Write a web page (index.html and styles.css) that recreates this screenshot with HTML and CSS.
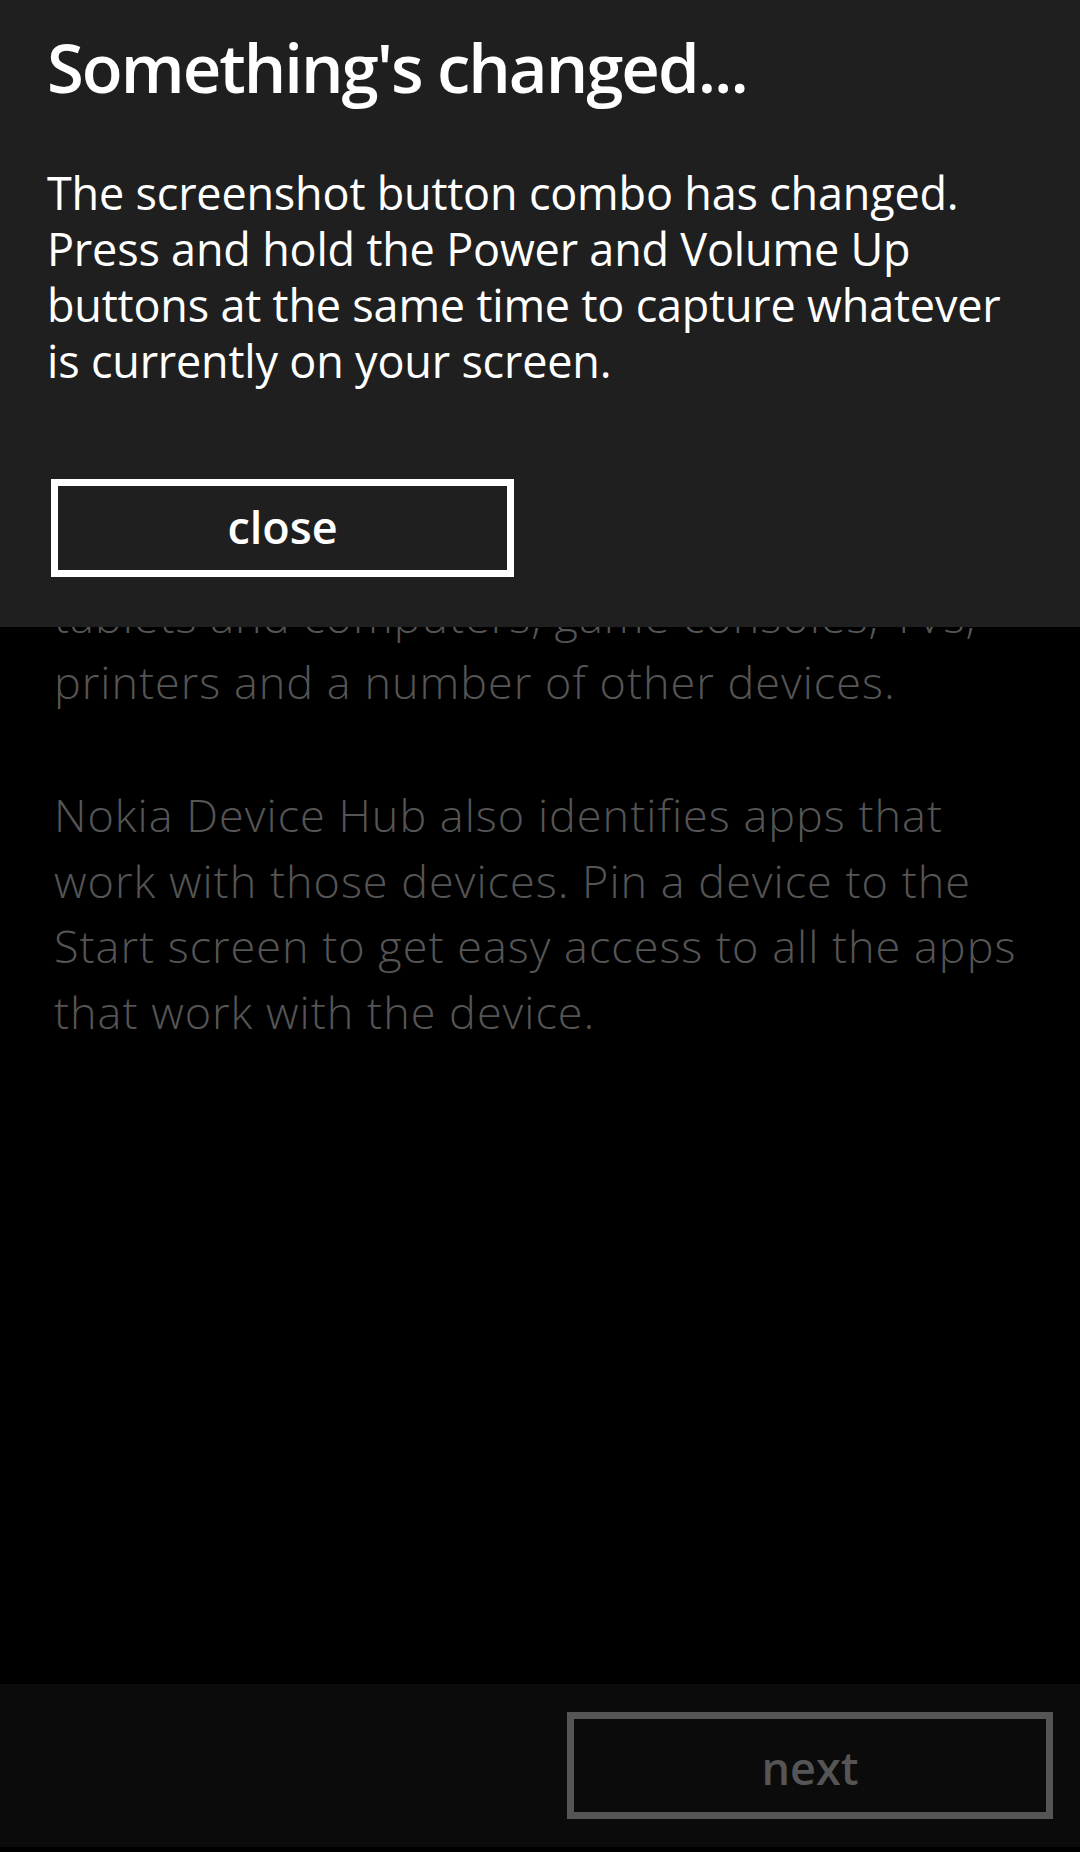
FILE: index.html
```html
<!DOCTYPE html>
<html lang="en">

<head>
    <meta charset="UTF-8">
    <meta name="viewport" content="width=device-width, initial-scale=1.0">
    <title>Nokia Device Hub</title>
    <link rel="stylesheet" href="styles.css">
</head>

<body>
    <div class="screen">
        <div class="content">
            <p class="info">
                tablets and computers, game consoles, TVs,<br>
                printers and a number of other devices.
            </p>
            <p class="info">
                Nokia Device Hub also identifies apps that<br>
                work with those devices. Pin a device to the<br>
                Start screen to get easy access to all the apps<br>
                that work with the device.
            </p>
        </div>

        <div class="appbar">
            <button class="next-btn" disabled>next</button>
        </div>
        <div class="bottom-edge"></div>

        <!-- message box over the page -->
        <div class="dialog">
            <h1 class="dialog-title">Something's changed...</h1>
            <p class="dialog-text">
                The screenshot button combo has changed.<br>
                Press and hold the Power and Volume Up<br>
                buttons at the same time to capture whatever<br>
                is currently on your screen.
            </p>
            <button class="close-btn">close</button>
        </div>
    </div>
</body>

</html>
```

FILE: styles.css
```css
body {
    margin: 0;
    background-color: #000000;
    font-family: 'Open Sans', 'Noto Sans', sans-serif;
}

.screen {
    position: relative;
    width: 1080px;
    height: 1852px;
    display: flex;
    flex-direction: column;
    overflow: hidden;
}

.content {
    flex: 1;
    padding: 583px 0 0 54px;
}

.info {
    margin: 0 0 68px 0;
    font-size: 45px;
    font-weight: 300;
    letter-spacing: 1px;
    line-height: 65.5px;
    color: #555555;
}

.appbar {
    height: 163px;
    background-color: #0b0b0b;
    display: flex;
    justify-content: flex-end;
    align-items: flex-start;
    padding: 28px 27px 0 0;
    box-sizing: border-box;
}

.bottom-edge {
    height: 5px;
    background-color: #000000;
}

.next-btn {
    width: 486px;
    height: 107px;
    padding: 4px 0 0 0;
    box-sizing: border-box;
    border: 7px solid #555555;
    background-color: transparent;
    color: #555555;
    font-family: 'Open Sans', 'Noto Sans', sans-serif;
    font-size: 45px;
    font-weight: 600;
    line-height: 89px;
}

.dialog {
    position: absolute;
    top: 0;
    left: 0;
    right: 0;
    height: 627px;
    box-sizing: border-box;
    padding: 27px 47px 0 47px;
    background-color: #1f1f1f;
    color: #ffffff;
}

.dialog-title {
    margin: 0;
    font-size: 67px;
    font-weight: 600;
    letter-spacing: -2px;
    line-height: 80px;
}

.dialog-text {
    margin: 57.5px 0 0 0;
    font-size: 45px;
    font-weight: 400;
    letter-spacing: -0.2px;
    line-height: 56px;
}

.close-btn {
    display: block;
    width: 463px;
    height: 98px;
    margin: 90.5px 0 0 4px;
    padding: 0 0 2px 0;
    box-sizing: border-box;
    border: 7px solid #ffffff;
    background-color: transparent;
    color: #ffffff;
    font-family: 'Open Sans', 'Noto Sans', sans-serif;
    font-size: 45px;
    font-weight: 600;
    line-height: 82px;
    cursor: pointer;
}
```
